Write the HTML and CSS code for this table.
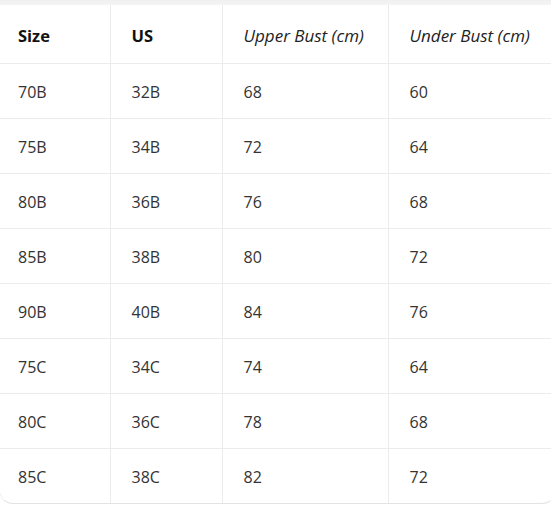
FILE: index.html
```html
<!DOCTYPE html>
<html>
<head>
<meta charset="utf-8">
<link rel="stylesheet" href="styles.css">
</head>
<body>
<div class="topband"></div>
<div class="card">
  <table class="size-table">
    <colgroup>
      <col class="c1"><col class="c2"><col class="c3"><col class="c4">
    </colgroup>
    <thead>
      <tr><th>Size</th><th>US</th><th class="it">Upper Bust (cm)</th><th class="it">Under Bust (cm)</th></tr>
    </thead>
    <tbody>
      <tr><td>70B</td><td>32B</td><td>68</td><td>60</td></tr>
      <tr><td>75B</td><td>34B</td><td>72</td><td>64</td></tr>
      <tr><td>80B</td><td>36B</td><td>76</td><td>68</td></tr>
      <tr><td>85B</td><td>38B</td><td>80</td><td>72</td></tr>
      <tr><td>90B</td><td>40B</td><td>84</td><td>76</td></tr>
      <tr><td>75C</td><td>34C</td><td>74</td><td>64</td></tr>
      <tr><td>80C</td><td>36C</td><td>78</td><td>68</td></tr>
      <tr><td>85C</td><td>38C</td><td>82</td><td>72</td></tr>
    </tbody>
  </table>
</div>
</body>
</html>
```
FILE: styles.css
```css
html, body {
  margin: 0;
  padding: 0;
  background: #ffffff;
  overflow: hidden;
}
body {
  font-family: "Open Sans", "Noto Sans", sans-serif;
  color: #333333;
  width: 551px;
  height: 511px;
}
.topband {
  height: 5px;
  background: linear-gradient(#f0f0f0, #f4f4f4);
}
.card {
  width: 556px;
  margin-left: -1px;
  border-bottom: 1px solid #e3e3e3;
  border-left: 1px solid #f2f2f2;
  border-radius: 0 0 14px 14px;
  overflow: hidden;
}
.size-table {
  border-collapse: collapse;
  width: 556px;
  table-layout: fixed;
}
.c1 { width: 110px; }
.c2 { width: 112px; }
.c3 { width: 166px; }
.c4 { width: 168px; }
.size-table th,
.size-table td {
  text-align: left;
  padding: 2px 0 0 21px;
  border-right: 1px solid #ececec;
  border-bottom: 1px solid #ececec;
  font-size: 16px;
  white-space: nowrap;
}
.size-table th {
  height: 55px;
  padding-top: 3px;
  font-size: 16.5px;
  font-weight: 700;
  color: #111111;
}
.size-table th.it {
  font-style: italic;
  font-weight: 400;
  font-size: 17px;
  color: #222222;
}
.size-table td {
  height: 52px;
}
.size-table tbody tr:last-child td {
  border-bottom: none;
}
.size-table th:first-child,
.size-table td:first-child {
  padding-left: 18px;
}
.size-table th:last-child,
.size-table td:last-child {
  border-right: none;
}
```
